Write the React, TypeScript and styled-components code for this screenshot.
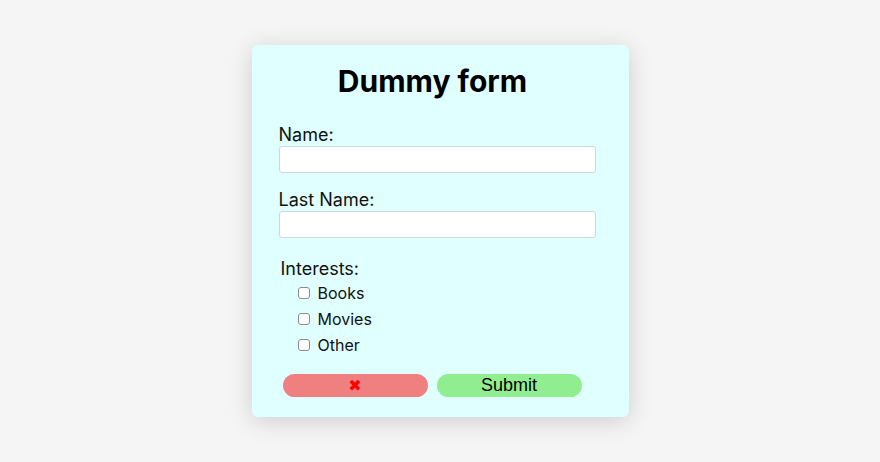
import React, { FormEvent, useState } from 'react';
import styled, { createGlobalStyle } from 'styled-components';

const interests = ['Books', 'Movies', 'Other'];

const App = (): JSX.Element => {
   const [name, setName] = useState('');
   const [lastName, setLastName] = useState('');
   const [checked, setChecked] = useState<string[]>([]);

   const toggle = (item: string) =>
      setChecked(prev => (prev.includes(item) ? prev.filter(i => i !== item) : [...prev, item]));

   const handleSubmit = (e: FormEvent<HTMLFormElement>) => {
      e.preventDefault();
   };

   const reset = () => {
      setName('');
      setLastName('');
      setChecked([]);
   };

   return (
      <>
         <GlobalStyle />
         <Page>
            <Card onSubmit={handleSubmit}>
               <Title>Dummy form</Title>
               <Field>
                  <Label htmlFor="name">Name:</Label>
                  <Input id="name" value={name} onChange={e => setName(e.target.value)} />
               </Field>
               <Field>
                  <Label htmlFor="lastName">Last Name:</Label>
                  <Input id="lastName" value={lastName} onChange={e => setLastName(e.target.value)} />
               </Field>
               <Interests>
                  <Legend>Interests:</Legend>
                  {interests.map(item => (
                     <CheckRow key={item}>
                        <Checkbox checked={checked.includes(item)} onChange={() => toggle(item)} />
                        {item}
                     </CheckRow>
                  ))}
               </Interests>
               <Buttons>
                  <Button type="button" $color="#f08080" onClick={reset}>
                     <Cross>✖</Cross>
                  </Button>
                  <Button type="submit" $color="#90ee90">Submit</Button>
               </Buttons>
            </Card>
         </Page>
      </>
   );
};

export default App;

const GlobalStyle = createGlobalStyle`
   body {
      margin: 0;
      background: #f5f5f5;
      font-family: Inter, "Noto Sans", sans-serif;
   }
`;

const Page = styled.div`
   min-height: 100vh;
   display: flex;
   align-items: center;
   justify-content: center;
`;

const Card = styled.form`
   width: 377px;
   box-sizing: border-box;
   padding: 16px 33px 20px 27px;
   background: #e0ffff;
   border-radius: 6px;
   box-shadow: 0 4px 24px rgba(0, 0, 0, 0.16);
   display: flex;
   flex-direction: column;
`;

const Title = styled.h1`
   margin: 0 9px 23px 0;
   text-align: center;
   font-size: 30px;
   line-height: 40px;
   font-weight: 700;
   color: #000;
`;

const Field = styled.div`
   display: flex;
   flex-direction: column;
   margin-bottom: 16px;
`;

const Label = styled.label`
   font-size: 18px;
   line-height: 22px;
   color: #111;
`;

const Input = styled.input.attrs(() => ({ type: 'text' }))`
   height: 27px;
   box-sizing: border-box;
   width: 100%;
   border: 1px solid #cfd6d6;
   border-radius: 3px;
   background: #fff;
   padding: 0 6px;
   font-size: 16px;
   outline: none;
`;

const Interests = styled.div`
   margin-top: 4px;
   padding-left: 2px;
   display: flex;
   flex-direction: column;
`;

const Legend = styled.span`
   font-size: 18px;
   line-height: 22px;
   color: #111;
`;

const CheckRow = styled.label`
   display: flex;
   align-items: center;
   height: 26px;
   padding-left: 17px;
   font-size: 16px;
   color: #111;
`;

const Checkbox = styled.input.attrs(() => ({ type: 'checkbox' }))`
   appearance: none;
   margin: 0 8px 0 0;
   width: 12px;
   height: 12px;
   border: 1px solid #8c8c8c;
   border-radius: 3px;
   background: #fff;
   &:checked {
      background: #4a90e2;
      border-color: #4a90e2;
   }
`;

const Buttons = styled.div`
   display: flex;
   gap: 9px;
   margin-top: 16px;
   padding-left: 4px;
`;

const Button = styled.button<{ $color: string }>`
   width: 145px;
   height: 23px;
   border: none;
   border-radius: 12px;
   background: ${({ $color }) => $color};
   font-family: "Liberation Sans", Arial, sans-serif;
   font-size: 18px;
   color: #000;
   padding: 0;
   display: flex;
   align-items: center;
   justify-content: center;
   cursor: pointer;
`;

const Cross = styled.span`
   color: #ff0000;
   font-family: "DejaVu Sans", sans-serif;
   font-size: 16px;
`;
